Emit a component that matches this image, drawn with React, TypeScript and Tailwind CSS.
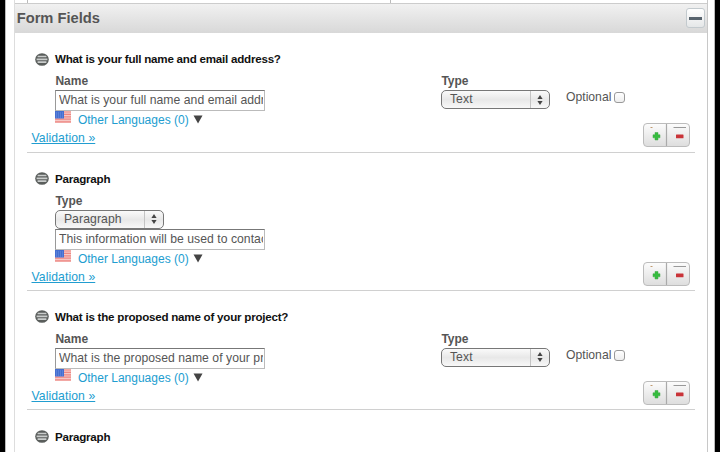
import React from "react";

function ListIcon() {
  return (
    <svg width="14" height="13" viewBox="0 0 14 13" className="mr-[6px] shrink-0">
      <ellipse cx="7" cy="6.5" rx="6.8" ry="6.3" fill="#5a5e5c" />
      <path d="M2.6 3.5h8.8M1.6 6.3h10.8M2.6 9.1h8.8" stroke="#c9cccb" strokeWidth="1.7" />
    </svg>
  );
}

function Flag() {
  return (
    <svg width="16" height="12" viewBox="0 0 16 12" className="mr-[6.5px] shrink-0">
      <rect width="16" height="12" fill="#f6c9c6" />
      <path d="M0 1h16M0 3.4h16M0 5.8h16M0 8.2h16M0 10.8h16" stroke="#ee8782" strokeWidth="1.2" />
      <rect width="9" height="7.5" fill="#456ed0" />
      <path d="M1 2h7M1 4h7M1 6h7" stroke="#7a9fe6" strokeWidth=".8" strokeDasharray="1 1" />
    </svg>
  );
}

function Select({ value }: { value: string }) {
  return (
    <div className="flex h-[19px] w-[109px] overflow-hidden rounded-[5px] border border-[#777] bg-linear-to-b from-[#fafafa] via-[#e8e8e8] to-[#f8f8f8] text-[12.2px] leading-[17px] text-[#555]">
      <span className="flex-1 pl-[7.5px] tracking-[.1px]">{value}</span>
      <span className="flex w-[19px] items-center justify-center border-l border-[#c4c4c4]">
        <svg width="6" height="10" viewBox="0 0 6 10" fill="#444">
          <path d="M3 0l2.6 4H.4zM3 10L.4 6h5.2z" />
        </svg>
      </span>
    </div>
  );
}

function TextField({ value }: { value: string }) {
  return (
    <div className="h-[21px] w-[210px] overflow-hidden border border-[#bbb] border-t-[#777] border-l-[#999] bg-white pl-[2.5px] pr-px text-[12.2px] leading-[19px] text-[#555]">
      <div className="overflow-hidden whitespace-nowrap tracking-[.04px]">{value}</div>
    </div>
  );
}

function RowButtons() {
  return (
    <div className="flex h-[24px] w-[47px] overflow-hidden rounded-[4px] border border-[#bcbcbc] bg-linear-to-b from-[#fcfcfc] to-[#dedede]">
      <svg width="45" height="22" viewBox="0 0 45 22">
        <path d="M22.5 0v22" stroke="#aaa" strokeWidth="1.2" />
        <path d="M6.5 3.5h2" stroke="#c09a70" />
        <path d="M29.5 3.5h12.5" stroke="#999" />
        <path d="M11 8.5h3v2.3h2v3h-2v2.2h-3v-2.2H9v-3h2z" fill="#35bd3e" stroke="#45a64b" strokeWidth=".5" />
        <rect x="32" y="10.5" width="7.5" height="3.7" rx=".5" fill="#c93439" />
      </svg>
    </div>
  );
}

function FieldLabel({ children }: { children: string }) {
  return <div className="h-[15px] text-[12px] leading-[15px] font-bold text-[#555]">{children}</div>;
}

function Field({ title, value, paragraph = false }: { title: string; value: string; paragraph?: boolean }) {
  return (
    <section className={`mr-[12px] ml-[12px] border-b border-[#d0d0d0] ${paragraph ? "h-[138.4px]" : "h-[119.5px]"}`}>
      <h3 className="flex h-[52px] items-center pl-[8px] text-[11.6px] font-bold tracking-[-.23px] text-[#111]">
        <ListIcon />{title}
      </h3>
      <div className="-mt-[11px] flex items-start pl-[28.4px]">
        <div className="w-[386px]">
          <FieldLabel>{paragraph ? "Type" : "Name"}</FieldLabel>
          <div className="pt-px">
            {paragraph && <Select value="Paragraph" />}
            <TextField value={value} />
          </div>
          <div className="flex h-[17px] items-start">
            <Flag />
            <span className="mt-px text-[12px] leading-[17px] text-[#219dd0]">Other Languages (0)</span>
            <svg width="10" height="9" viewBox="0 0 10 9" className="mt-[4px] ml-1">
              <path d="M.5.5h9L5 8.5z" fill="#444" />
            </svg>
          </div>
        </div>
        {!paragraph && (
          <>
            <div className="w-[124.6px]"><FieldLabel>Type</FieldLabel><div className="pt-px"><Select value="Text" /></div></div>
            <label className="mt-[16px] flex items-center text-[12.2px] leading-[15px] text-[#555]">
              Optional<span className="ml-[3px] h-[11px] w-[11px] rounded-[3px] border border-[#999] bg-linear-to-b from-white to-[#eee]" />
            </label>
          </>
        )}
      </div>
      <div className="-mt-[5px] flex items-start justify-between pr-[5.4px] pl-[4.5px]">
        <a className="mt-[7px] text-[12.2px] leading-[17px] tracking-[.08px] text-[#219dd0] underline">Validation »</a>
        <RowButtons />
      </div>
    </section>
  );
}

export default function App() {
  return (
    <main className="h-[452px] w-[720px] overflow-hidden bg-black pr-[5px] pl-[5px] font-['Liberation_Sans',Arial,sans-serif]">
      <div className="h-full border-x border-[#bbb] bg-white pr-[6px] pl-[8px]">
        <div className="h-full border-r border-l border-r-[#c8c8c8] border-l-[#ddd]">
          <div className="ml-[12px] h-[3px] w-[364px] border-x border-[#bbb]" />
          <header className="flex h-[30px] items-center justify-between border-t border-[#ccc] bg-linear-to-b from-[#f1f1f1] to-[#d8d8d8] pr-[2px] pb-px pl-[1.7px]">
            <h2 className="text-[14.7px] font-bold text-[#555]">Form Fields</h2>
            <button className="flex h-[20px] w-[19px] items-center justify-center rounded-[3px] border border-[#c3cace] bg-linear-to-b from-white to-[#e5e7e8]">
              <span className="h-[3px] w-[13px] bg-[#57636d]" />
            </button>
          </header>
          <Field title="What is your full name and email address?" value="What is your full name and email address?" />
          <Field paragraph title="Paragraph" value="This information will be used to contact you" />
          <Field title="What is the proposed name of your project?" value="What is the proposed name of your project?" />
          <Field paragraph title="Paragraph" value="Please describe your project" />
        </div>
      </div>
    </main>
  );
}
